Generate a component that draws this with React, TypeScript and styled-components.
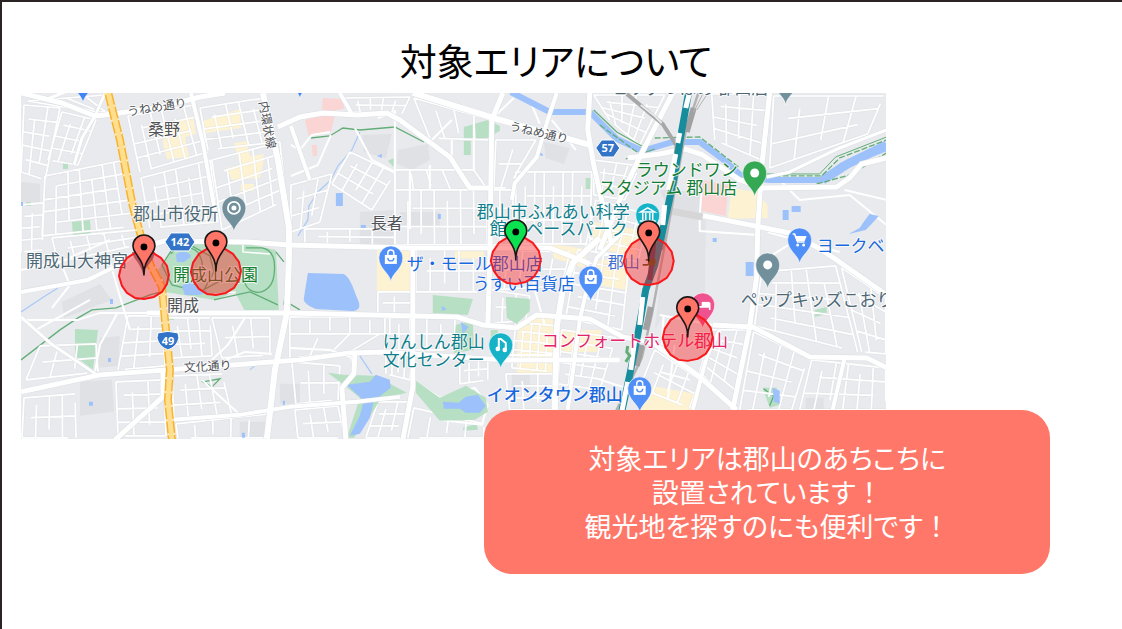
import React from 'react';
import styled, { createGlobalStyle } from 'styled-components';

const GlobalStyle = createGlobalStyle`
  body {
    margin: 0;
    background: #ffffff;
    color: #000000;
    font-family: "Noto Sans CJK JP", "Liberation Sans", sans-serif;
  }
`;

const Page = styled.main`
  box-sizing: border-box;
  min-height: 100vh;
  border-top: 2px solid #2b2425;
  border-left: 2px solid #2b2425;
  background: #ffffff;
`;

const Header = styled.header`
  padding: 35px 12px 10px 0;
  text-align: center;
`;

const Title = styled.h1`
  margin: 0;
  font-size: 37px;
  font-weight: 400;
  line-height: 46px;
  font-feature-settings: "palt";
`;

const MapFigure = styled.figure`
  width: 77.2%;
  margin: 0 0 0 19px;
`;

const MapDrawing = styled.svg`
  display: block;
  width: 100%;
  height: auto;
  background: #e8eaed;
`;

const Callout = styled.section`
  position: relative;
  box-sizing: border-box;
  width: 50.5%;
  margin: -29px 72px 0 auto;
  padding: 31px 24px;
  border-radius: 28px;
  background: #ff7768;
  color: #ffffff;
  text-align: center;
`;

const CalloutText = styled.p`
  margin: 0;
  font-size: 27px;
  font-weight: 400;
  line-height: 34px;
  font-feature-settings: "palt";
`;

const FullWidth = styled.span`
  font-feature-settings: normal;
`;

const PlaceName = styled.text<{ $size: number; $weight: number }>`
  font-size: ${(p) => p.$size}px;
  font-weight: ${(p) => p.$weight};
  paint-order: stroke;
  stroke: #ffffff;
  stroke-width: 2px;
  stroke-opacity: 0.75;
  stroke-linejoin: round;
`;

const ShieldNumber = styled.text`
  font-family: "Open Sans", "Noto Sans", sans-serif;
  font-size: 11px;
  font-weight: 700;
  fill: #ffffff;
  text-anchor: middle;
`;

type Corner = [number, number];

/* Streets of a city block area, spread evenly between four corners (clockwise from top left). */
function streets(a: Corner, b: Corner, c: Corner, d: Corner, cols: number, rows: number): string {
  const mix = (p: Corner, q: Corner, t: number): Corner => [p[0] + (q[0] - p[0]) * t, p[1] + (q[1] - p[1]) * t];
  const pt = (p: Corner) => `${p[0].toFixed(1)} ${p[1].toFixed(1)}`;
  const out: string[] = [];
  for (let i = 0; i <= cols; i++) {
    const t = i / cols;
    const s = i % 3 === 1 ? 0.2 : 0;
    const top = mix(a, b, t);
    const bottom = mix(d, c, t);
    out.push(`M${pt(mix(top, bottom, s))}L${pt(mix(top, bottom, i % 4 === 2 ? 0.8 : 1))}`);
  }
  for (let j = 0; j <= rows; j++) {
    const t = j / rows;
    const left = mix(a, d, t);
    const right = mix(b, c, t);
    out.push(`M${pt(mix(left, right, j % 3 === 1 ? 0.15 : 0))}L${pt(mix(left, right, j % 3 === 2 ? 0.85 : 1))}`);
  }
  return out.join('');
}

const blocks = [
  streets([24, 105], [60, 108], [45, 180], [21, 172], 3, 5),
  streets([62, 112], [96, 120], [78, 165], [48, 160], 3, 4),
  streets([45, 176], [125, 160], [138, 226], [42, 236], 7, 5),
  streets([21, 205], [44, 203], [42, 250], [21, 252], 2, 4),
  streets([128, 116], [195, 105], [208, 152], [140, 172], 6, 4),
  streets([141, 178], [210, 160], [218, 222], [150, 228], 6, 4),
  streets([200, 108], [264, 98], [276, 142], [208, 150], 5, 4),
  streets([212, 160], [280, 142], [286, 200], [222, 230], 5, 5),
  streets([28, 101], [105, 95], [110, 112], [92, 112], 4, 1),
  streets([52, 238], [138, 230], [142, 244], [58, 262], 5, 2),
  streets([128, 316], [163, 316], [165, 366], [118, 370], 3, 4),
  streets([165, 318], [210, 318], [212, 356], [172, 358], 4, 3),
  streets([212, 318], [270, 318], [270, 355], [222, 358], 3, 2),
  streets([116, 382], [164, 380], [166, 436], [118, 436], 3, 4),
  streets([172, 376], [222, 374], [232, 416], [174, 420], 4, 3),
  streets([176, 424], [268, 414], [266, 438], [178, 438], 5, 1),
  streets([24, 398], [75, 394], [76, 438], [22, 438], 4, 2),
  streets([40, 346], [96, 344], [98, 372], [26, 380], 3, 2),
  streets([344, 98], [410, 97], [402, 114], [350, 112], 5, 2),
  streets([414, 98], [494, 121], [490, 140], [430, 138], 4, 1),
  streets([395, 170], [474, 170], [488, 190], [395, 190], 5, 1),
  streets([395, 190], [513, 190], [514, 245], [395, 245], 9, 3),
  streets([496, 140], [536, 140], [508, 188], [494, 188], 2, 2),
  streets([516, 172], [592, 172], [590, 244], [516, 244], 8, 3),
  streets([350, 152], [395, 173], [372, 210], [332, 184], 4, 3),
  streets([291, 185], [332, 174], [320, 222], [291, 232], 3, 3),
  streets([305, 229], [395, 229], [395, 246], [305, 244], 4, 2),
  streets([416, 250], [488, 250], [488, 292], [416, 292], 5, 2),
  streets([378, 292], [411, 292], [411, 314], [378, 314], 2, 2),
  streets([290, 317], [410, 317], [410, 334], [290, 334], 6, 1),
  streets([290, 334], [380, 334], [350, 352], [290, 358], 3, 1),
  streets([385, 318], [455, 318], [455, 350], [385, 350], 5, 2),
  streets([292, 362], [340, 366], [338, 400], [296, 404], 3, 2),
  streets([295, 410], [338, 406], [345, 438], [298, 438], 3, 2),
  streets([386, 355], [412, 355], [410, 380], [386, 374], 4, 1),
  streets([378, 402], [408, 402], [402, 438], [366, 438], 3, 3),
  streets([414, 408], [484, 424], [484, 438], [408, 438], 4, 1),
  streets([460, 358], [488, 358], [488, 380], [460, 384], 3, 2),
  streets([492, 250], [570, 252], [562, 286], [490, 290], 5, 2),
  streets([490, 290], [530, 296], [526, 320], [490, 324], 3, 2),
  streets([516, 322], [556, 326], [554, 372], [512, 368], 5, 5),
  streets([506, 374], [554, 374], [552, 410], [510, 410], 3, 3),
  streets([562, 330], [616, 338], [600, 390], [558, 384], 4, 5),
  streets([578, 250], [630, 256], [622, 330], [566, 318], 4, 6),
  streets([594, 160], [640, 166], [625, 200], [594, 195], 4, 3),
  streets([596, 200], [650, 215], [638, 262], [585, 250], 5, 4),
  streets([594, 95], [665, 95], [640, 145], [610, 120], 5, 4),
  streets([712, 94], [768, 94], [762, 160], [715, 140], 4, 4),
  streets([774, 96], [884, 96], [868, 134], [770, 168], 4, 3),
  streets([762, 272], [836, 266], [858, 352], [755, 326], 5, 5),
  streets([754, 332], [808, 358], [792, 410], [740, 410], 4, 4),
  streets([812, 360], [886, 368], [886, 410], [800, 410], 6, 3),
  streets([712, 330], [750, 330], [732, 405], [700, 372], 3, 5),
  streets([655, 350], [700, 380], [690, 408], [640, 388], 4, 2),
  streets([842, 268], [886, 298], [886, 354], [862, 352], 3, 4),
].join('');

const lanes = [
  'M490 121L514 98M530 100L540 124M552 120L576 150M291 145L300 150L312 135L330 132',
  'M331 135L318 165L291 176M395 110V245M355 128L372 160L395 172M378 118L394 112',
  'M432 140L452 120M410 170V229M430 165V190M452 140V158M474 122V170',
  'M700 215V231L758 235M700 215L702 190M768 232L840 252M768 258L800 238',
  'M780 180L800 200L850 195L887 225M845 190L887 200',
  'M660 372L690 380M675 345L668 400M21 270L60 262L110 240',
  'M62 266L70 285L52 308M110 262L118 290L130 330M36 330L90 300',
  'M118 312L100 345L95 372M21 320H78L100 313L160 313',
  'M202 380L240 415M245 318L228 345L212 360M226 360L245 352L272 354',
  'M350 353L355 372L342 388M290 348L330 350L350 357M412 380L440 398L475 388L488 405L482 425L440 420',
  'M595 378L626 388M510 355L555 355M535 290L545 325M660 315L713 325M664 315L662 345',
];

const roads: { d: string; w: number }[] = [
  { d: 'M21 93L62 103L95 116L113 114L160 107L200 97L225 93', w: 5 },
  { d: 'M47 99L65 92M95 116L103 98L106 92M95 116L82 138L74 165', w: 3 },
  { d: 'M191 93L203 143L217 222', w: 4 },
  { d: 'M263 93L278 160L289 227L289 260L287 313L275 370L267 439', w: 6 },
  { d: 'M278 127L300 117L323 113L357 115L387 113L400 120L450 157L470 188H490', w: 5 },
  { d: 'M340 93L352 114M291 126L310 180', w: 4 },
  { d: 'M143 247L165 241L247 242L290 245L413 248L550 248L573 257L590 264', w: 5 },
  { d: 'M21 292L88 280L125 262L143 247', w: 4 },
  { d: 'M147 313H290L457 317L483 325L517 328L537 315L590 319L623 337L653 343L700 377L737 410', w: 5 },
  { d: 'M21 392L100 375L167 370L300 360L350 353L383 352L440 356L503 360H620', w: 5 },
  { d: 'M115 440L163 397V370', w: 5 },
  { d: 'M21 317L50 343L97 375', w: 3 },
  { d: 'M172 420L240 415L290 407L357 402L400 397', w: 4 },
  { d: 'M355 355L354 374L342 388L346 439', w: 5 },
  { d: 'M413 248V387L403 440', w: 5 },
  { d: 'M503 93L492 120L490 260L488 325', w: 5 },
  { d: 'M413 93L497 119L590 145', w: 6 },
  { d: 'M557 93L547 123L537 157L515 183L512 200', w: 4 },
  { d: 'M590 93L588 130L594 165L612 245', w: 5 },
  { d: 'M600 238L573 263L563 290L557 327L555 410', w: 6 },
  { d: 'M620 235L597 258L588 285L580 320L568 410', w: 4 },
  { d: 'M673 93L640 157L622 195L600 250', w: 5 },
  { d: 'M628 158L660 154L685 149L703 155L740 180L763 188L837 187L850 178L862 164L887 158', w: 5 },
  { d: 'M770 93L762 167L758 230L757 277L750 327L733 410', w: 5 },
  { d: 'M700 215L790 233L817 247L837 260L887 295', w: 5 },
  { d: 'M767 177L790 172L840 148L887 130', w: 3 },
  { d: 'M713 325L753 327L810 357L867 358L887 368', w: 5 },
  { d: 'M720 330L707 357L693 410M845 358L833 410', w: 4 },
];

const slateBlue = '#4d6875';
const gray = '#505357';
const teal = '#0f7f8d';
const blue = '#1a68dd';
const green = '#147f34';
const pink = '#e3246b';

interface Place { text: string; x: number; y: number; color: string; size?: number; weight?: number; turn?: number }

const places: Place[] = [
  { text: 'うねめ通り', x: 128, y: 116, color: gray, size: 12, turn: -9 },
  { text: '桑野', x: 148, y: 135, color: gray, size: 16 },
  { text: '内環状線', x: 259, y: 102, color: gray, size: 12, turn: 80 },
  { text: 'うねめ通り', x: 509, y: 130, color: gray, size: 12, turn: 13 },
  { text: '郡山市役所', x: 133, y: 220, color: slateBlue },
  { text: '長者', x: 371, y: 229, color: gray, size: 16 },
  { text: '開成山大神宮', x: 26, y: 267, color: slateBlue },
  { text: '開成山公園', x: 173, y: 281, color: green },
  { text: '開成', x: 167, y: 311, color: gray, size: 16 },
  { text: '文化通り', x: 184, y: 372, color: gray, size: 12, turn: -3 },
  { text: '郡山市ふれあい科学', x: 477, y: 218, color: teal },
  { text: '館 スペースパーク', x: 490, y: 235, color: teal },
  { text: 'ザ・モール郡山店', x: 407, y: 270, color: blue },
  { text: 'うすい百貨店', x: 473, y: 290, color: blue },
  { text: 'けんしん郡山', x: 383, y: 348, color: teal },
  { text: '文化センター', x: 383, y: 366, color: teal },
  { text: 'コンフォートホテル郡山', x: 542, y: 347, color: pink },
  { text: 'イオンタウン郡山', x: 487, y: 401, color: blue, weight: 500 },
  { text: 'ラウンドワン', x: 636, y: 176, color: green },
  { text: 'スタジアム 郡山店', x: 599, y: 194, color: green },
  { text: 'ヨークベ', x: 817, y: 252, color: blue },
  { text: 'ペップキッズこおり', x: 741, y: 306, color: slateBlue },
  { text: '郡山', x: 608, y: 268, color: '#3f6fd0', size: 16 },
  { text: 'ビッグつばめ 郡山店', x: 612, y: 94, color: slateBlue },
];

/* Point-of-interest marker: round head at (x, y) with its tip 24 units below. */
function PoiPin({ x, y, color, children }: { x: number; y: number; color: string; children?: React.ReactNode }) {
  return (
    <g transform={`translate(${x} ${y})`}>
      <path d="M0 24C-1 15-12 11-12 0A12 12 0 0 1 12 0C12 11 1 15 0 24Z" fill={color} stroke="#ffffff" strokeOpacity="0.6" strokeWidth="1" />
      {children}
    </g>
  );
}

const Bag = () => (
  <g>
    <path d="M-6-3H6V6H-6Z" fill="#ffffff" />
    <path d="M-3-3V-5A3 3 0 0 1 3-5V-3" fill="none" stroke="#ffffff" strokeWidth="1.5" />
    <path d="M-3 0A3 3 0 0 0 3 0" fill="none" stroke="#4f8ff7" strokeWidth="1.4" />
  </g>
);

/* Target area: translucent circle with a placemark whose tip is at its centre. */
function TargetArea({ x, y, color = '#ff7567' }: { x: number; y: number; color?: string }) {
  return (
    <g transform={`translate(${x} ${y})`}>
      <path
        d="M0-24L9-22L17-17L23-9L25 0L23 9L18 17L10 22L0 24L-9 23L-17 18L-22 11L-25 1L-23-8L-17-17L-9-22Z"
        fill="#ff1a1a"
        fillOpacity="0.4"
        stroke="#f9191d"
        strokeWidth="2"
        strokeLinejoin="round"
      />
      <path d="M0 0C0-10-3-14-7-20C-9-23-11-25-11-29A11 11 0 0 1 11-29C11-25 9-23 7-20C3-14 0-10 0 0Z" fill={color} stroke="#1d1716" strokeWidth="1.6" strokeLinejoin="round" />
      <circle cy="-28" r="3.4" fill="#000000" />
    </g>
  );
}

const route49 = 'M108 92L120 140L133 207L142 240L151 266L162 287L165 320L170 370L168 400L172 440';

function AreaMap() {
  return (
    <MapDrawing viewBox="21 93 865 346" role="img" aria-label="郡山の対象エリアの地図">
      <g fill="#dfe1e5">
        <path d="M21 182L40 184V202H21ZM62 302L100 284L112 300L64 318ZM100 338L120 336L118 366L96 368ZM80 382L112 380L114 412L80 416Z" />
        <path d="M362 135L392 134L386 158L364 152ZM398 150L428 144L430 160L412 170L397 164ZM360 212L395 210V245H360ZM400 212H440V228H400ZM544 142L570 148L564 164L546 158Z" />
        <path d="M660 190L702 192V214L670 212ZM280 384H300V404H280ZM512 374H530V392H512ZM240 422H266V438H240ZM806 398H824V410H806Z" />
        <path d="M671 215L706 220L705 320L664 316L655 330L662 268Z" fill="#e1e3e7" />
      </g>
      <g fill="#fdf3d2">
        <path d="M164 125L193 116L196 134L185 137L189 157L167 159L163 143ZM203 121L240 109L241 128L206 133ZM234 143L247 141L250 156L264 154L262 163L240 164ZM227 168L264 160L260 178L232 180ZM241 184H254V191H241Z" />
        <path d="M377 248H410V291H377ZM455 251L484 250V259L455 258ZM551 244L588 249L584 268L554 258ZM592 262L630 255L628 290L590 284Z" />
        <path d="M518 324L553 314L554 374H517ZM560 330L602 330L598 352H558ZM594 222L640 230L636 258L592 246Z" />
        <path d="M732 188L756 192L768 205V218L728 219ZM652 386L700 395L692 412H640Z" />
      </g>
      <g fill="#fbd5d3">
        <path d="M323 98L343 99L344 109L322 112ZM305 120L337 107L331 132L309 137ZM312 145H317V156H313ZM702 180L729 185L726 216L702 211Z" />
      </g>
      <g fill="#b7dfc3">
        <path d="M72 222L90 220L91 234L73 236ZM75 329L98 330L93 370L83 362L75 356Z" />
        <path d="M464 127L488 120L500 126V131L487 138L464 138ZM464 141H471V155H464ZM388 161L394 158V167ZM586 178H592V189H586Z" />
        <path d="M463 428L477 424L478 430L464 431ZM763 388L777 388L780 405L770 408ZM815 310L827 307V314L815 317ZM26 202H31V206H26ZM63 162H68V169H63ZM166 317H174V320H166Z" />
      </g>
      <g fill="none" stroke="#a9c8f8" strokeWidth="1.2">
        <path d="M360 132L352 150L338 166L331 180L318 192L309 206L308 220L298 236M21 312L42 298L58 288M360 356L372 374M250 370L262 360" />
      </g>
      <g fill="none" stroke="#63ae78" strokeWidth="1.3">
        <path d="M21 360L60 330L78 318L92 310L116 308L150 295L168 290M311 138L330 136L343 128L360 130L395 127L424 142M290 304L300 310M203 382L220 379L212 387ZM764 389L774 396L770 406" />
      </g>

      <path d={blocks} fill="none" stroke="#d8dbe0" strokeWidth="3" opacity="0.35" />
      <path d={blocks} fill="none" stroke="#ffffff" strokeWidth="1.7" />
      <path d={lanes.join('')} fill="none" stroke="#ffffff" strokeWidth="2" strokeLinejoin="round" />

      <g fill="#b7dfc3">
        <path d="M200 242L244 243L276 250L279 311L245 311L235 292L215 300L165 292L158 270L172 250Z" />
        <path d="M433 295L473 299L468 315L433 313ZM506 297L530 299V311L517 324L507 318ZM456 325L473 320L474 350L454 353ZM491 330H498V344H491Z" />
        <path d="M328 373L343 375L375 376L407 393L381 399L368 420L354 438H347L360 398L345 386ZM416 381L440 398L466 386L486 398L488 412L475 420L440 421L416 393Z" />
      </g>
      <path
        d="M175 245L162 265L172 285L200 292L222 280M190 245L210 256L214 272L204 290M171 254C178 244 196 246 200 256C206 268 200 282 188 290M246 248H262C274 250 276 262 274 276C272 290 260 296 250 290C242 284 244 274 240 266M214 300L250 292L278 305M276 252L284 262M288 275L284 305"
        fill="none"
        stroke="#63ae78"
        strokeWidth="1.3"
      />
      <path d="M243 245V252L270 254M214 294L236 292" fill="none" stroke="#ffffff" strokeWidth="1.5" />
      <g fill="#9dc1fb">
        <path d="M308 273L344 274C352 279 354 292 359 302C361 309 357 311 352 311L316 309C308 306 303 302 304 298Z" />
        <path d="M347 385L370 382L376 375L390 380L391 388L374 401L370 418L360 434L350 436L360 416L364 401ZM443 402L459 403L466 397L478 395L486 406L480 413L466 413L460 409L444 409Z" />
        <path d="M336 193H343V206H336ZM176 255C179 250 190 251 191 257L184 262H177ZM182 286L190 281L200 290L208 291L200 295L185 295ZM21 202H23V206H21Z" />
        <path d="M783 210H789V220H783ZM792 206H801V212H792ZM864 222L870 214L879 216L872 224L866 230L849 234L860 228ZM746 262H754V276H746ZM773 388L780 391V404L774 402ZM461 322L469 327L463 334Z" />
        <path d="M110 299H113V304H110ZM108 358H111V362H108ZM89 402H93V406H89ZM377 156L382 154V158ZM539 152L543 154V156L539 155ZM438 214H441V219H438ZM361 225H366V228H361ZM713 238H717V242H713ZM442 306L447 309L442 311ZM242 433H245V438H242ZM283 401H285V405H283Z" />
      </g>

      <g fill="none" strokeLinejoin="round">
        <path d="M511 92L550 112L590 112L617 139L643 151L673 142H700L723 159L743 177L770 180L823 180L843 165L887 148" stroke="#9dc1fb" strokeWidth="6" />
        <path d="M823 180L848 164L887 145" stroke="#9dc1fb" strokeWidth="9" />
        <path d="M594 110L617 132L642 146M626 159L655 149" stroke="#63ae78" strokeWidth="1.2" />
        <path d="M655 138L700 137L740 168M767 176L822 176L840 158L887 140M817 184L850 175L887 153M600 125L640 154" stroke="#63ae78" strokeWidth="1.3" strokeDasharray="6 2" />
        <path d="M765 174L820 174L836 157L887 137" stroke="#63ae78" strokeWidth="1" />
      </g>

      <g fill="none" stroke="#dcdfe4" strokeLinejoin="round">
        {roads.map((r) => <path key={r.d} d={r.d} strokeWidth={r.w + 1} />)}
      </g>
      <g fill="none" stroke="#ffffff" strokeLinejoin="round">
        {roads.map((r) => <path key={r.d} d={r.d} strokeWidth={r.w} />)}
      </g>

      <g fill="none" strokeLinejoin="round">
        <path d={route49} stroke="#f7b32d" strokeWidth="8" />
        <path d={route49} stroke="#fff0cc" strokeWidth="8" strokeDasharray="2 12" />
        <path d={route49} stroke="#ffdf8f" strokeWidth="5" />
      </g>

      <g fill="none">
        <path d="M670 211L703 217" stroke="#d6d6d6" strokeWidth="7" />
        <path d="M626 93L663 124L677 146L673 178" stroke="#a7a7a7" strokeWidth="4" />
        <path d="M641 105L655 116L662 123M677 150L673 178" stroke="#e8eaed" strokeWidth="2" />
        <path d="M699 92L686 131L676 185L667 235L652 315L642 358L616 412" stroke="#b3b3b3" strokeWidth="2.5" />
        <path d="M694 108L687 132M651 307L646 330M642 345L637 366M665 220L661 250" stroke="#a1a1a1" strokeWidth="6" />
        <path d="M704 92L694 112M709 92L697 110" stroke="#b3b3b3" strokeWidth="1" />
        <path d="M689 92L682 131L674 180L662 235L655 265L646 290L638 335L630 375L622 412" stroke="#178c9c" strokeWidth="7" />
        <path d="M690 92L686 108M680 133L678 143M676 154L669 190M665 205L663 225M643 297L640 325M635 340L631 370M628 382L622 412" stroke="#ffffff" strokeWidth="5" />
        <path d="M655 235L650 280" stroke="#494c60" strokeWidth="5" />
        <path d="M628 346L627 352L630 356L626 362" stroke="#63ae78" strokeWidth="3" />
      </g>

      <g fill="#3374c8" stroke="#ffffff" strokeWidth="1">
        <path d="M171 233H189L195 242L189 251H171L165 242Z" />
        <path d="M602 140H614L620 148L614 157H602L596 148Z" />
        <path d="M158 333Q168 330 178 333L179 338Q177 347 168 350Q159 347 157 338Z" />
      </g>
      <ShieldNumber x="180" y="246">142</ShieldNumber>
      <ShieldNumber x="608" y="152">57</ShieldNumber>
      <ShieldNumber x="168" y="345">49</ShieldNumber>

      <PoiPin x={83} y={79} color="#4285f4" />
      <PoiPin x={300} y={75} color="#4285f4" />
      <PoiPin x={786} y={81} color="#71909c" />
      <PoiPin x={234} y={208} color="#71909c">
        <circle r="2.5" fill="#ffffff" />
        <circle r="6" fill="none" stroke="#ffffff" strokeWidth="1.8" />
      </PoiPin>
      <PoiPin x={391} y={258} color="#4f8ff7"><Bag /></PoiPin>
      <PoiPin x={591} y={278} color="#4f8ff7"><Bag /></PoiPin>
      <PoiPin x={640} y={389} color="#4f8ff7"><Bag /></PoiPin>
      <PoiPin x={501} y={345} color="#16b2c8">
        <path d="M-2 4V-6H0L5-2V5" fill="none" stroke="#ffffff" strokeWidth="2" />
        <circle cx="-3" cy="4" r="2.3" fill="#ffffff" />
        <circle cx="4" cy="5" r="2.3" fill="#ffffff" />
      </PoiPin>
      <PoiPin x={648} y={215} color="#16b2c8">
        <path d="M-7-3L0-7L7-3Z" fill="none" stroke="#ffffff" strokeWidth="1.5" />
        <path d="M-5-2V5M-2-2V5M2-2V5M5-2V5M-8 6H8" stroke="#ffffff" strokeWidth="1.5" />
      </PoiPin>
      <PoiPin x={755} y={173} color="#34a853"><circle r="4.5" fill="#ffffff" /></PoiPin>
      <PoiPin x={768} y={265} color="#71909c"><circle r="4.5" fill="#ffffff" /></PoiPin>
      <PoiPin x={800} y={240} color="#4f8ff7">
        <path d="M-7-6H-5L-2 2H5" fill="none" stroke="#ffffff" strokeWidth="1.6" />
        <path d="M-5-4H7L5 1H-3Z" fill="#ffffff" />
        <circle cx="-2" cy="5" r="1.5" fill="#ffffff" />
        <circle cx="4" cy="5" r="1.5" fill="#ffffff" />
      </PoiPin>
      <PoiPin x={703} y={305} color="#ee5390">
        <path d="M-7-4V5M7 5V-2M-7 2H7" fill="none" stroke="#ffffff" strokeWidth="1.6" />
        <path d="M-1-3H7V2H-1Z" fill="#ffffff" />
      </PoiPin>

      {places.map((p) => (
        <PlaceName
          key={`${p.text}-${p.x}`}
          $size={p.size ?? 17}
          $weight={p.weight ?? 400}
          x={p.x}
          y={p.y}
          fill={p.color}
          transform={p.turn ? `rotate(${p.turn} ${p.x} ${p.y})` : undefined}
        >
          {p.text}
        </PlaceName>
      ))}
      <path d="M643 265H647Q649 265 649 263V260H646M651 266V260H655V263H651L655 266" fill="none" stroke="#4d5b1f" strokeWidth="1.6" />

      <path d="M132 252C134 260 141 264 143 274C146 265 154 262 155 252Z" fill="#71506d" opacity="0.75" />
      <TargetArea x={144} y={275} />
      <TargetArea x={216} y={271} />
      <TargetArea x={516} y={260} color="#0be24f" />
      <TargetArea x={649} y={261} />
      <TargetArea x={688} y={337} />
    </MapDrawing>
  );
}

export default function App() {
  return (
    <>
      <GlobalStyle />
      <Page lang="ja">
        <Header>
          <Title>対象エリアについて</Title>
        </Header>
        <MapFigure>
          <AreaMap />
        </MapFigure>
        <Callout>
          <CalloutText>
            対象エリアは郡山のあちこちに
            <br />
            設置されています<FullWidth>！</FullWidth>
            <br />
            観光地を探すのにも便利です<FullWidth>！</FullWidth>
          </CalloutText>
        </Callout>
      </Page>
    </>
  );
}
